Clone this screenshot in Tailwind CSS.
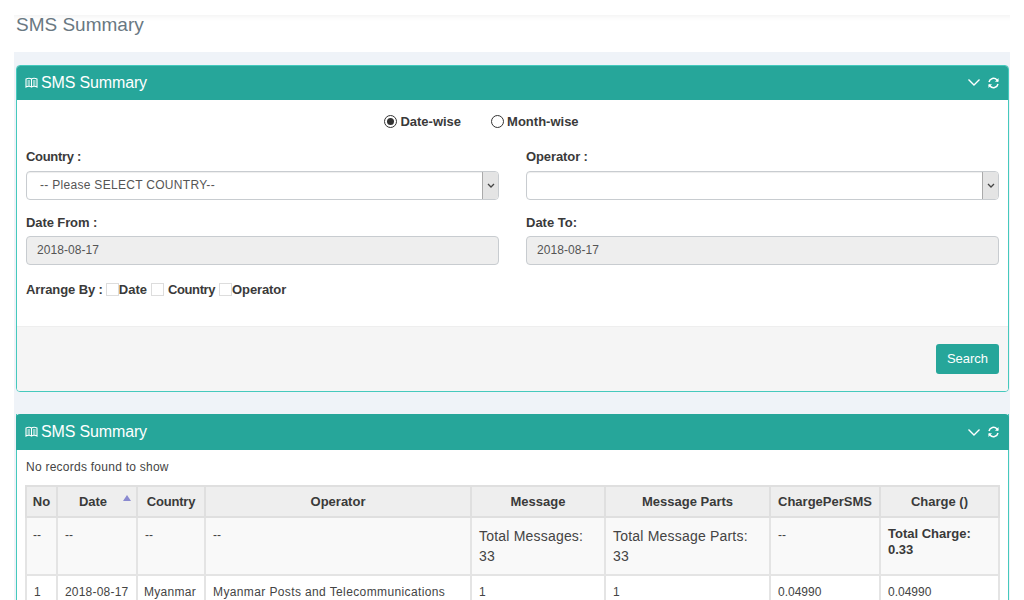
<!DOCTYPE html>
<html><head><meta charset="utf-8"><script src="https://cdn.jsdelivr.net/npm/@tailwindcss/browser@4"></script></head>
<body class="bg-white">
<div class="h-[600px] w-[1024px] overflow-hidden bg-white font-['Liberation_Sans',Arial,sans-serif] text-[12px] text-[#3a3a3a] pl-[14px] pr-[14px] pt-[15px]">
  <div class="h-[37px] bg-white shadow-[inset_0_6px_5px_-4px_rgba(0,0,0,0.05)] pl-[2px]">
    <h1 class="text-[19px] leading-[20px] text-[#697882]">SMS Summary</h1>
  </div>
  <div class="bg-[#eff3f8] h-[560px] pl-[2px] pr-[1px] pt-[13px]">
    <section class="h-[327px] border border-[#45c9bd] rounded-[4px] bg-white flex flex-col overflow-hidden">
      <header class="h-[35px] -mx-px -mt-px bg-[#26a69a] flex items-center justify-between pl-[9px] pr-[9px] text-white shrink-0">
        <div class="flex items-center gap-[3px]">
          <svg width="13" height="12" viewBox="0 0 13 12" fill="none" stroke="white" stroke-width="1.100"><path d="M1 2c2-1 4-1 5.500 0c1.500-1 3.500-1 5.500 0v8c-2-1-4-1-5.500 0c-1.500-1-3.500-1-5.500 0z"/><path d="M6.500 2v8M2.500 4h2.500M2.500 6h2.500M2.500 8h2.500M8 4h2.500M8 6h2.500M8 8h2.500"/></svg>
          <span class="text-[16px] leading-[16px] tracking-[-0.15px]">SMS Summary</span>
        </div>
        <div class="flex items-center gap-[6px]">
          <svg width="14" height="9" viewBox="0 0 14 9" fill="none" stroke="white" stroke-width="1.400"><path d="M1.500 1.500L7 7l5.500-5.500"/></svg>
          <svg width="13" height="12" viewBox="0 0 12 12" fill="none" stroke="white" stroke-width="1.500"><path d="M1.500 5a4.600 4.600 0 0 1 8-2l1 1.200M10.500 7a4.600 4.600 0 0 1-8 2l-1-1.200"/><path d="M11 1v3.800H7.500z" fill="white" stroke="none"/><path d="M1 11V7.200h3.500z" fill="white" stroke="none"/></svg>
        </div>
      </header>
      <div class="flex-1 px-[9px]">
        <div class="flex justify-center items-center h-[42px] pt-[1px] font-bold text-[13px] gap-[30px] pr-[62px]">
          <label class="flex items-center gap-[3px]"><span class="w-[13px] h-[13px] -mt-[1px] rounded-full border border-[#333] flex items-center justify-center"><span class="w-[7px] h-[7px] rounded-full bg-[#333]"></span></span>Date-wise</label>
          <label class="flex items-center gap-[3px]"><span class="w-[13px] h-[13px] -mt-[1px] rounded-full border border-[#333]"></span>Month-wise</label>
        </div>
        <div class="grid grid-cols-[473px_473px] gap-x-[27px] mt-[7px]">
          <div>
            <label class="block font-bold text-[13px] leading-[16px] tracking-[-0.3px]">Country :</label>
            <div class="mt-[6px] h-[29px] pb-[1px] border border-[#c8ccd0] rounded-[4px] flex items-center justify-between pl-[13px] text-[#555] tracking-[0.3px] shadow-[inset_0_1px_1px_rgba(0,0,0,0.07)]">
              <span>-- Please SELECT COUNTRY--</span>
              <span class="w-[16px] h-[27px] border-l border-[#aaa] bg-[#e4e4e4] rounded-r-[3px] flex items-center justify-center"><svg width="8" height="5" viewBox="0 0 8 5" fill="none" stroke="#444" stroke-width="1.300"><path d="M1 1l3 3 3-3"/></svg></span>
            </div>
          </div>
          <div>
            <label class="block font-bold text-[13px] leading-[16px] tracking-[-0.1px]">Operator :</label>
            <div class="mt-[6px] h-[29px] border border-[#c8ccd0] rounded-[4px] flex items-center justify-end shadow-[inset_0_1px_1px_rgba(0,0,0,0.07)]">
              <span class="w-[16px] h-full border-l border-[#aaa] bg-[#e4e4e4] rounded-r-[3px] flex items-center justify-center"><svg width="8" height="5" viewBox="0 0 8 5" fill="none" stroke="#444" stroke-width="1.300"><path d="M1 1l3 3 3-3"/></svg></span>
            </div>
          </div>
          <div class="mt-[15px]">
            <label class="block font-bold text-[13px] leading-[16px] tracking-[-0.1px]">Date From :</label>
            <div class="mt-[5px] h-[29px] pb-[2px] border border-[#c8ccd0] rounded-[4px] bg-[#eeeeee] flex items-center pl-[10px] text-[#555] tracking-[0.05px]">2018-08-17</div>
          </div>
          <div class="mt-[15px]">
            <label class="block font-bold text-[13px] leading-[16px]">Date To:</label>
            <div class="mt-[5px] h-[29px] pb-[2px] border border-[#c8ccd0] rounded-[4px] bg-[#eeeeee] flex items-center pl-[10px] text-[#555] tracking-[0.05px]">2018-08-17</div>
          </div>
        </div>
        <div class="flex items-center font-bold text-[13px] mt-[17px] h-[16px]">
          <span class="tracking-[-0.1px]">Arrange By :</span>
          <span class="ml-[3px] w-[13px] h-[13px] border border-[#ddd] -mt-[2px]"></span><span>Date</span>
          <span class="ml-[4px] w-[13px] h-[13px] border border-[#ddd] -mt-[2px]"></span><span class="ml-[4px] tracking-[-0.4px]">Country</span>
          <span class="ml-[4px] w-[13px] h-[13px] border border-[#ddd] -mt-[2px]"></span><span class="tracking-[-0.1px]">Operator</span>
        </div>
      </div>
      <footer class="h-[65px] bg-[#f5f5f5] border-t border-[#eeeeee] flex items-center justify-end pr-[9px] shrink-0">
        <button class="w-[63px] h-[30px] bg-[#26a69a] rounded-[3px] text-white text-[13px]">Search</button>
      </footer>
    </section>
    <section class="mt-[22px] border-x border-[#45c9bd] bg-white h-[200px]">
      <header class="h-[36px] -mx-px bg-[#26a69a] flex items-center justify-between pl-[9px] pr-[9px] text-white rounded-t-[4px]">
        <div class="flex items-center gap-[3px]">
          <svg width="13" height="12" viewBox="0 0 13 12" fill="none" stroke="white" stroke-width="1.100"><path d="M1 2c2-1 4-1 5.500 0c1.500-1 3.500-1 5.500 0v8c-2-1-4-1-5.500 0c-1.500-1-3.500-1-5.500 0z"/><path d="M6.500 2v8M2.500 4h2.500M2.500 6h2.500M2.500 8h2.500M8 4h2.500M8 6h2.500M8 8h2.500"/></svg>
          <span class="text-[16px] leading-[16px] tracking-[-0.15px]">SMS Summary</span>
        </div>
        <div class="flex items-center gap-[6px]">
          <svg width="14" height="9" viewBox="0 0 14 9" fill="none" stroke="white" stroke-width="1.400"><path d="M1.500 1.500L7 7l5.500-5.500"/></svg>
          <svg width="13" height="12" viewBox="0 0 12 12" fill="none" stroke="white" stroke-width="1.500"><path d="M1.500 5a4.600 4.600 0 0 1 8-2l1 1.200M10.500 7a4.600 4.600 0 0 1-8 2l-1-1.200"/><path d="M11 1v3.800H7.500z" fill="white" stroke="none"/><path d="M1 11V7.200h3.500z" fill="white" stroke="none"/></svg>
        </div>
      </header>
      <div class="px-[9px]">
        <p class="h-[35px] pt-[9px] leading-[16px] text-[#444] tracking-[0.25px]">No records found to show</p>
        <table class="table-fixed border-collapse w-[973px] -ml-px text-[12px] text-[#444]">
          <colgroup><col class="w-[31px]"><col class="w-[80px]"><col class="w-[68px]"><col class="w-[266px]"><col class="w-[134px]"><col class="w-[165px]"><col class="w-[110px]"><col class="w-[119px]"></colgroup>
          <thead><tr class="h-[31px] bg-[#eeeeee] font-bold text-[13px] text-[#3a3a3a] text-center">
            <th class="border-2 border-[#dfdfdf]">No</th>
            <th class="border-2 border-[#dfdfdf] relative pr-[8px]">Date<svg class="absolute right-[5px] top-[8px]" width="8" height="6" viewBox="0 0 8 6"><path d="M4 0l4 6H0z" fill="#8a8ad0"/></svg></th>
            <th class="border-2 border-[#dfdfdf] tracking-[-0.2px]">Country</th>
            <th class="border-2 border-[#dfdfdf]">Operator</th>
            <th class="border-2 border-[#dfdfdf]">Message</th>
            <th class="border-2 border-[#dfdfdf]">Message Parts</th>
            <th class="border-2 border-[#dfdfdf]">ChargePerSMS</th>
            <th class="border-2 border-[#dfdfdf]">Charge ()</th>
          </tr></thead>
          <tbody>
            <tr class="h-[58px] bg-[#f9f9f9] align-top">
              <td class="border-2 border-[#e4e4e4] pt-[8px] pl-[6px]">--</td>
              <td class="border-2 border-[#e4e4e4] pt-[8px] pl-[7px]">--</td>
              <td class="border-2 border-[#e4e4e4] pt-[8px] pl-[7px]">--</td>
              <td class="border-2 border-[#e4e4e4] pt-[8px] pl-[7px]">--</td>
              <td class="border-2 border-[#e4e4e4] pt-[8px] pl-[7px] pr-[10px] text-[14px] leading-[20px] tracking-[0.2px]">Total Messages: 33</td>
              <td class="border-2 border-[#e4e4e4] pt-[8px] pl-[7px] pr-[10px] text-[14px] leading-[20px] tracking-[0.2px]">Total Message Parts: 33</td>
              <td class="border-2 border-[#e4e4e4] pt-[8px] pl-[7px]">--</td>
              <td class="border-2 border-[#e4e4e4] pt-[8px] pl-[7px] pr-[10px] font-bold text-[13px] leading-[16px] text-[#3a3a3a]">Total Charge: 0.33</td>
            </tr>
            <tr class="h-[31px] align-top">
              <td class="border-2 border-[#e4e4e4] pt-[7px] pl-[7px]">1</td>
              <td class="border-2 border-[#e4e4e4] pt-[7px] pl-[7px] tracking-[0.2px]">2018-08-17</td>
              <td class="border-2 border-[#e4e4e4] pt-[7px] pl-[6px] tracking-[0.3px]">Myanmar</td>
              <td class="border-2 border-[#e4e4e4] pt-[7px] pl-[7px] tracking-[0.38px]">Myanmar Posts and Telecommunications</td>
              <td class="border-2 border-[#e4e4e4] pt-[7px] pl-[7px]">1</td>
              <td class="border-2 border-[#e4e4e4] pt-[7px] pl-[7px]">1</td>
              <td class="border-2 border-[#e4e4e4] pt-[7px] pl-[7px]">0.04990</td>
              <td class="border-2 border-[#e4e4e4] pt-[7px] pl-[7px]">0.04990</td>
            </tr>
          </tbody>
        </table>
      </div>
    </section>
  </div>
</div>
</body></html>
